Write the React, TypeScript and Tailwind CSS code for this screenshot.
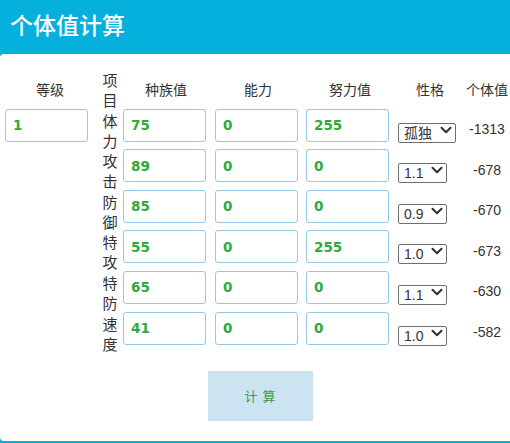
import { ChevronDown } from "lucide-react";

const rows = [
  { label: "体力", base: "75", ability: "0", effort: "255", nature: "孤独", iv: "-1313", wide: true },
  { label: "攻击", base: "89", ability: "0", effort: "0", nature: "1.1", iv: "-678" },
  { label: "防御", base: "85", ability: "0", effort: "0", nature: "0.9", iv: "-670" },
  { label: "特攻", base: "55", ability: "0", effort: "255", nature: "1.0", iv: "-673" },
  { label: "特防", base: "65", ability: "0", effort: "0", nature: "1.1", iv: "-630" },
  { label: "速度", base: "41", ability: "0", effort: "0", nature: "1.0", iv: "-582" },
];

const cjk = "font-['Noto_Sans_CJK_SC',sans-serif]";
const grid = "grid grid-cols-[100px_20px_92px_92px_92px_68px_1fr] h-[40.6px]";

function NumInput({ value }: { value: string }) {
  return (
    <input
      defaultValue={value}
      className="h-[33px] w-[83px] rounded-[3px] border border-[#94c8e4] bg-white pl-[7px] font-['DejaVu_Sans',sans-serif] text-[13.5px] font-bold text-[#2eaa3c] outline-none"
    />
  );
}

function Nature({ value, wide }: { value: string; wide?: boolean }) {
  return (
    <div className={`relative h-[20px] ${wide ? "w-[58px]" : "w-[49px]"}`}>
      <select
        defaultValue={value}
        className="h-[20px] w-full appearance-none rounded-[2px] border border-[#6e6e6e] bg-white py-0 pl-[5px] font-['Liberation_Sans','Noto_Sans_CJK_SC',sans-serif] text-[14px] leading-[18px] text-[#333]"
      >
        <option value={value}>{value}</option>
      </select>
      <ChevronDown
        size={18}
        strokeWidth={2.8}
        className="pointer-events-none absolute right-[1px] top-[1px] text-[#333]"
      />
    </div>
  );
}

export default function App() {
  return (
    <div className="h-[443px] w-[510px] overflow-hidden bg-[#05b1dc] text-[#333]">
      <div className={`flex h-[54px] items-center pb-[6px] pl-[10px] ${cjk} text-[23px] font-medium text-white`}>
        个体值计算
      </div>

      <div className="h-[387px] rounded-l-[4px] bg-white pt-[14px]">
        <div className={`${grid} ${cjk} text-[14px]`}>
          <div className="flex items-center justify-center">等级</div>
          <div className="mt-[2px] flex flex-col items-center justify-center text-[15px] leading-[20px]">
            <span>项</span>
            <span>目</span>
          </div>
          <div className="flex items-center justify-center">种族值</div>
          <div className="flex items-center justify-center">能力</div>
          <div className="flex items-center justify-center">努力值</div>
          <div className="flex items-center justify-center">性格</div>
          <div className="flex items-center justify-center">个体值</div>
        </div>

        {rows.map((r, i) => (
          <div key={r.label} className={grid}>
            <div className="pl-[5px]">{i === 0 && <NumInput value="1" />}</div>
            <div className={`mt-[2px] flex flex-col items-center justify-center ${cjk} text-[15px] leading-[20px]`}>
              <span>{r.label[0]}</span>
              <span>{r.label[1]}</span>
            </div>
            <div className="pl-[3px]">
              <NumInput value={r.base} />
            </div>
            <div className="pl-[3px]">
              <NumInput value={r.ability} />
            </div>
            <div className="pl-[2px]">
              <NumInput value={r.effort} />
            </div>
            <div className="flex items-center pl-[2px]">
              <Nature value={r.nature} wide={r.wide} />
            </div>
            <div className="flex items-center justify-center font-['Liberation_Sans',sans-serif] text-[14px]">
              {r.iv}
            </div>
          </div>
        ))}

        <button
          className={`ml-[208px] mt-[19px] h-[50px] w-[105px] bg-[#cce4f2] ${cjk} text-[13px] tracking-[1px] text-[#3a9a4a]`}
        >
          计 算
        </button>
      </div>
    </div>
  );
}
